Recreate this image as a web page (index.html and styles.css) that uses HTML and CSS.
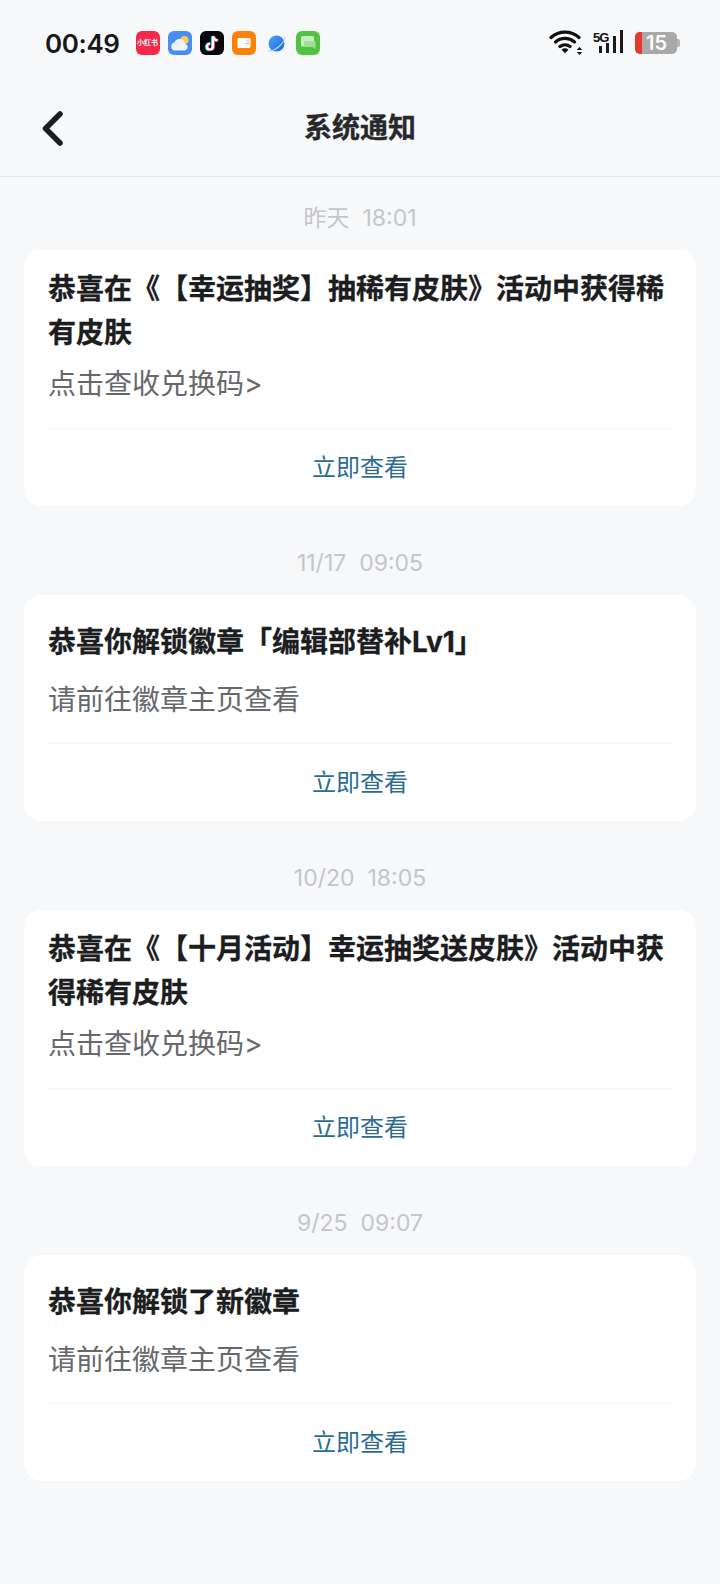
FILE: index.html
```html
<!DOCTYPE html>
<html lang="zh-CN">
  <head>
    <meta charset="UTF-8" />
    <meta name="viewport" content="width=device-width, initial-scale=1.0" />
    <title>系统通知</title>
    <link rel="stylesheet" href="styles.css">
  </head>
  <body>
    <div class="status-bar">
      <span class="clock">00:49</span>
      <div class="app-icons">
        <span class="app app-red">小红书</span>
        <svg class="app" viewBox="0 0 24 24">
          <rect width="24" height="24" rx="6" fill="#4a8df2"/>
          <circle cx="16.500" cy="9" r="4" fill="#f5cf58"/>
          <path d="M7 19.500a4 4 0 0 1-.6-7.900A5.500 5.500 0 0 1 17 12.700a3.500 3.500 0 0 1 0 6.800z" fill="#eef4fc"/>
        </svg>
        <svg class="app" viewBox="0 0 24 24">
          <rect width="24" height="24" rx="6" fill="#07070c"/>
          <path d="M13 5v10.500a3 3 0 1 1-3-3M13 5c.4 2.600 2 4 4.500 4.300" fill="none" stroke="#25e0e6" stroke-width="2.600" transform="translate(-.8 .4)"/>
          <path d="M13 5v10.500a3 3 0 1 1-3-3M13 5c.4 2.600 2 4 4.500 4.300" fill="none" stroke="#f5345c" stroke-width="2.600" transform="translate(.8 .2)"/>
          <path d="M13 5v10.500a3 3 0 1 1-3-3M13 5c.4 2.600 2 4 4.500 4.300" fill="none" stroke="#fff" stroke-width="2.200"/>
        </svg>
        <svg class="app" viewBox="0 0 24 24">
          <rect width="24" height="24" rx="6" fill="#fb8209"/>
          <rect x="5.500" y="7" width="13" height="10" rx="1.200" fill="#fff"/>
          <path d="M14 10h3M14 12.500h3" stroke="#f5a65c" stroke-width="1"/>
        </svg>
        <svg class="app" viewBox="0 0 24 24">
          <defs>
            <linearGradient id="planet" x1="0" y1="0" x2="1" y2="1">
              <stop offset="0" stop-color="#4aa6f5"/>
              <stop offset="1" stop-color="#1c68d6"/>
            </linearGradient>
          </defs>
          <circle cx="12.500" cy="12.500" r="8" fill="url(#planet)"/>
          <path d="M4 19.500c3 1 7.500-1 11-4s5.500-6.500 6-9" fill="none" stroke="#a9d8f5" stroke-width="1.200"/>
        </svg>
        <svg class="app" viewBox="0 0 24 24">
          <rect width="24" height="24" rx="6" fill="#4fc443"/>
          <rect x="5" y="5" width="13" height="10.500" rx="1.500" fill="#c8eec0"/>
          <path d="M8 10h10.500a1 1 0 0 1 1 1v7l-3-2H8z" fill="#9fe08f"/>
        </svg>
      </div>
      <div class="status-right">
        <svg class="wifi" viewBox="0 2 34 26">
          <path d="M2 9.500a21 21 0 0 1 28 0M6.500 14a14.500 14.500 0 0 1 19 0M11 18.500a8 8 0 0 1 10 0" fill="none" stroke="#111" stroke-width="3.200" stroke-linecap="round"/>
          <path d="M12.500 21.800a5 5 0 0 1 7 0l-3.500 3.400z" fill="#111"/>
          <path d="M30.500 19l-2.800 3h5.600zM30.500 27l-2.800-3h5.600z" fill="#111"/>
        </svg>
        <div class="signal">
          <span class="signal-label">5G</span>
          <span class="bar bar-1"></span>
          <span class="bar bar-2"></span>
          <span class="bar bar-3"></span>
          <span class="bar bar-4"></span>
        </div>
        <div class="battery">
          <span class="battery-low"></span>
          <span class="battery-num">15</span>
        </div>
      </div>
    </div>

    <header class="nav">
      <svg class="back" viewBox="0 0 24 38">
        <path d="M20 5 5.500 19.500 20 34" fill="none" stroke="#1c1e21" stroke-width="5.500" stroke-linecap="round" stroke-linejoin="round"/>
      </svg>
      <h1>系统通知</h1>
    </header>

    <main class="list">
      <section class="notice">
        <div class="notice-time">昨天&nbsp;&nbsp;18:01</div>
        <div class="card">
          <div class="card-body">
            <div class="card-title">恭喜在《【幸运抽奖】抽稀有皮肤》活动中获得稀有皮肤</div>
            <div class="card-sub">点击查收兑换码&gt;</div>
          </div>
          <a class="card-link">立即查看</a>
        </div>
      </section>
      <section class="notice">
        <div class="notice-time">11/17&nbsp;&nbsp;09:05</div>
        <div class="card">
          <div class="card-body short">
            <div class="card-title">恭喜你解锁徽章「编辑部替补Lv1」</div>
            <div class="card-sub">请前往徽章主页查看</div>
          </div>
          <a class="card-link">立即查看</a>
        </div>
      </section>
      <section class="notice">
        <div class="notice-time">10/20&nbsp;&nbsp;18:05</div>
        <div class="card">
          <div class="card-body">
            <div class="card-title">恭喜在《【十月活动】幸运抽奖送皮肤》活动中获得稀有皮肤</div>
            <div class="card-sub">点击查收兑换码&gt;</div>
          </div>
          <a class="card-link">立即查看</a>
        </div>
      </section>
      <section class="notice">
        <div class="notice-time">9/25&nbsp;&nbsp;09:07</div>
        <div class="card">
          <div class="card-body short">
            <div class="card-title">恭喜你解锁了新徽章</div>
            <div class="card-sub">请前往徽章主页查看</div>
          </div>
          <a class="card-link">立即查看</a>
        </div>
      </section>
    </main>
  </body>
</html>
```

FILE: styles.css
```css
html,
body {
  margin: 0;
  padding: 0;
  background: #f7f8fa;
  font-family: Inter, 'Noto Sans CJK SC', sans-serif;
  color: #1c1e21;
}
body {
  height: 1584px;
  overflow: hidden;
}
.status-bar {
  height: 86px;
  display: flex;
  align-items: center;
  padding: 0 43px 0 45px;
  box-sizing: border-box;
}
.clock {
  font-size: 26px;
  font-weight: 600;
  letter-spacing: -0.4px;
  color: #17181a;
}
.app-icons {
  display: flex;
  gap: 8px;
  margin-left: 16px;
}
.app {
  width: 24px;
  height: 24px;
  display: block;
}
.app-red {
  background: #f4294a;
  border-radius: 6px;
  color: #fff;
  font-size: 7px;
  font-weight: 700;
  line-height: 24px;
  text-align: center;
  white-space: nowrap;
  overflow: hidden;
}
.status-right {
  margin-left: auto;
  display: flex;
  align-items: center;
  gap: 10px;
}
.wifi {
  width: 34px;
  height: 26px;
}
.signal {
  position: relative;
  width: 30px;
  height: 23px;
  margin-bottom: 3px;
  display: flex;
  align-items: flex-end;
  justify-content: flex-end;
  gap: 3.5px;
}
.signal-label {
  position: absolute;
  top: 0;
  left: 0;
  font-size: 13px;
  font-weight: 700;
  letter-spacing: -1px;
  font-family: 'Liberation Sans', sans-serif;
  color: #111;
}
.bar {
  width: 3.5px;
  background: #1a1a1a;
}
.bar-1 { height: 7px; }
.bar-2 { height: 10px; }
.bar-3 { height: 17px; }
.bar-4 { height: 23px; }
.battery {
  position: relative;
  width: 42px;
  height: 22px;
  margin-left: 2px;
  background: #a9a9a9;
  border-radius: 5px;
  display: flex;
}
.battery::after {
  content: '';
  position: absolute;
  right: -3px;
  top: 7px;
  width: 3px;
  height: 8px;
  background: #b5b5b5;
  border-radius: 0 2px 2px 0;
}
.battery-low {
  width: 7px;
  background: #e5392c;
  border-radius: 5px 0 0 5px;
}
.battery-num {
  flex: 1;
  font-size: 20px;
  font-weight: 600;
  line-height: 22px;
  color: #fff;
  text-align: center;
  padding-right: 6px;
}
.nav {
  position: relative;
  height: 91px;
  display: flex;
  align-items: center;
  justify-content: center;
  border-bottom: 1px solid #e6e7ea;
  box-sizing: border-box;
  padding-bottom: 10px;
}
.back {
  position: absolute;
  left: 40px;
  top: 23px;
  width: 24px;
  height: 38px;
}
.nav h1 {
  margin: 0;
  font-size: 28px;
  font-weight: 700;
  color: #26282b;
  -webkit-text-stroke: 0.3px #26282b;
}
.list {
  padding: 0 24px;
}
.notice {
  padding-top: 25px;
}
.notice:first-child {
  padding-top: 9px;
}
.notice-time {
  line-height: 64px;
  font-size: 23px;
  text-align: center;
  color: #c4c6c9;
}
.card {
  background: #fff;
  border-radius: 18px;
}
.card-body {
  padding: 17px 24px 0;
  height: 178px;
  box-sizing: border-box;
}
.card-body.short {
  padding-top: 25px;
  height: 148px;
}
.card-title {
  font-size: 28px;
  font-weight: 700;
  line-height: 44px;
  color: #1c1d1f;
  text-spacing-trim: space-all;
  -webkit-text-stroke: 0.3px #1c1d1f;
}
.card-sub {
  margin-top: 7px;
  font-size: 28px;
  line-height: 44px;
  color: #66686b;
}
.short .card-sub {
  margin-top: 14px;
}
.card-link {
  display: block;
  margin: 0 24px;
  height: 78px;
  line-height: 78px;
  border-top: 1px solid #f3f4f6;
  font-size: 24px;
  text-align: center;
  color: #2b6c8f;
  box-sizing: border-box;
}
```
